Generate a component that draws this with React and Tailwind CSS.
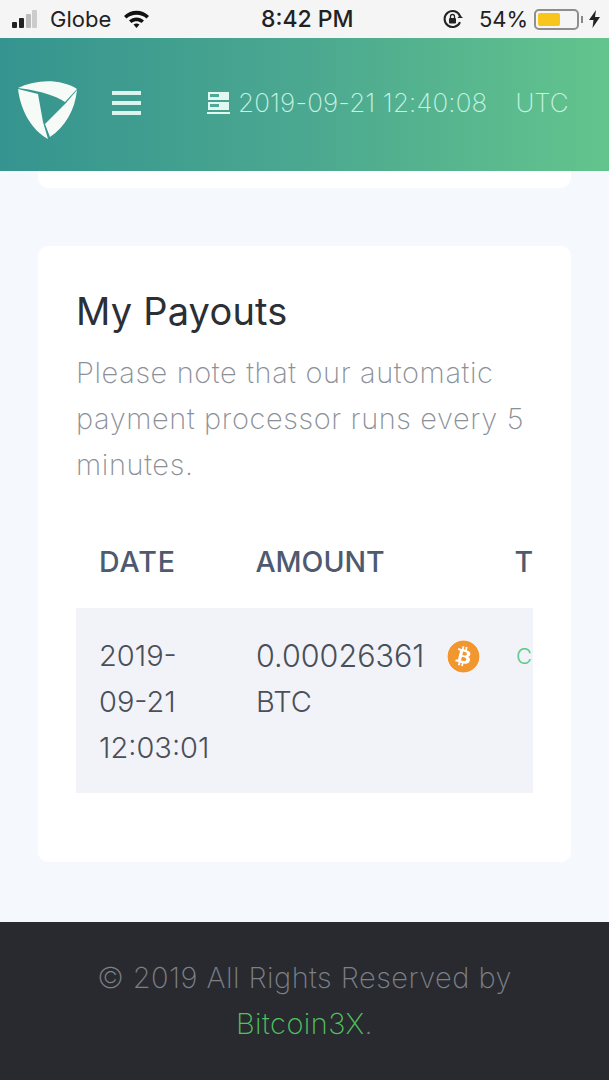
import React from "react";
import { FaBitcoin } from "react-icons/fa";

function StatusBar() {
  return (
    <div className="flex h-[38px] items-center bg-[#f5f5f5] pl-[12px] text-[22px] text-[#222]">
      <div className="flex w-[249px] items-center">
        <svg width="32" height="20" viewBox="0 0 32 20">
          <rect x="0" y="13" width="5" height="6" rx="1" fill="#222" />
          <rect x="7" y="9" width="5" height="10" rx="1" fill="#222" />
          <rect x="14" y="5" width="5" height="14" rx="1" fill="#bbb" />
          <rect x="20" y="1" width="5" height="18" rx="1" fill="#ccc" />
        </svg>
        <span className="ml-[6px] leading-none">Globe</span>
        <svg className="ml-[12px]" width="27" height="20" viewBox="0 0 27 20">
          <path d="M1 7 C8 0 19 0 26 7 L23.5 9.5 C18 4.5 9 4.5 3.5 9.5 Z" fill="#111" />
          <path d="M6 11.5 C10.500 7.500 16.500 7.500 21 11.5 L18.500 14 C15.500 11.500 11.500 11.500 8.500 14 Z" fill="#111" />
          <path d="M10.500 15.500 C12.500 14 14.500 14 16.500 15.500 L13.500 19 Z" fill="#111" />
        </svg>
      </div>
      <div className="w-[181px] text-[23px] font-medium leading-none">8:42 PM</div>
      <svg width="22" height="22" viewBox="0 0 22 22">
        <path d="M18 14 A8 8 0 1 1 18 8" fill="none" stroke="#222" strokeWidth="2" />
        <path d="M15.500 10 L21 10 L18 7 Z" fill="#222" />
        <rect x="7" y="10" width="7" height="5.500" rx="1" fill="#222" />
        <path d="M8.500 10 V8.500 A2 2 0 0 1 12.500 8.500 V10" fill="none" stroke="#222" strokeWidth="1.300" />
      </svg>
      <span className="ml-[15px] leading-none">54%</span>
      <div className="ml-[6px] flex h-[21px] w-[45px] items-center rounded-[5px] border-2 border-[#8e8e8e] p-[2px]">
        <div className="h-full w-[22px] rounded-[2px] bg-[#f7c51c]" />
      </div>
      <div className="ml-[2px] h-[7px] w-[2px] bg-[#888]" />
      <svg className="ml-[6px]" width="11" height="18" viewBox="0 0 11 18">
        <path d="M7 0 L0 10 L4.500 10 L3.500 18 L11 7 L6 7 Z" fill="#222" />
      </svg>
    </div>
  );
}

function Header() {
  return (
    <div className="flex h-[133px] items-center bg-[linear-gradient(90deg,#35948f,#4ba890_50%,#63c48d)] pb-[4px] text-[#c6f3e4]">
      <svg className="ml-[17px] mt-[16px]" width="63" height="62" viewBox="0 0 63 62">
        <path d="M1 8 C20 -1 44 -1 60 9 L48 22 C40 16 20 10 1 8 Z" fill="#f6fbf8" />
        <path d="M1 9 L21 14 L26 42 L31 59 C15 50 4 32 1 9 Z" fill="#f6fbf8" />
        <path d="M60 10 L49 23 L28 44 L33 57 C48 47 58 30 60 10 Z" fill="#f6fbf8" />
      </svg>
      <div className="ml-[32px] flex w-[29px] flex-col gap-[6px]">
        <div className="h-[4px] bg-[#d9f5ee]" />
        <div className="h-[4px] bg-[#d9f5ee]" />
        <div className="h-[4px] bg-[#d9f5ee]" />
      </div>
      <svg className="ml-[66px]" width="23" height="24" viewBox="0 0 23 24">
        <rect x="1" y="1" width="21" height="8" fill="#e3f7f0" />
        <rect x="1" y="11" width="21" height="8" fill="#e3f7f0" />
        <rect x="3" y="3" width="9" height="3" fill="#4fa99a" />
        <rect x="3" y="13" width="9" height="3" fill="#4fa99a" />
        <rect x="0" y="21" width="23" height="2" fill="#e3f7f0" />
      </svg>
      <span className="ml-[8px] text-[26px] font-extralight leading-none tracking-[0.15px]">2019-09-21 12:40:08</span>
      <span className="ml-[28px] text-[26px] font-extralight leading-none">UTC</span>
    </div>
  );
}

export default function App() {
  return (
    <div className="flex h-[1080px] flex-col overflow-hidden bg-[#f5f8fc] font-['Inter',sans-serif]">
      <StatusBar />
      <Header />
      <div className="mx-[38px] h-[17px] rounded-b-[10px] bg-white" />
      <div className="mx-[38px] mt-[58px] h-[616px] rounded-[10px] bg-white px-[38px] pt-[43px]">
        <h1 className="text-[38px] font-normal leading-[44px] tracking-[0.2px] text-[#2b2f36]">My Payouts</h1>
        <p className="mt-[17px] text-[29px] font-extralight leading-[46px] tracking-[0.6px] text-[#8b9098]">
          Please note that our automatic payment processor runs every 5 minutes.
        </p>
        <div className="mt-[25px] overflow-hidden">
          <div className="flex h-[95px] items-start pt-[31px] text-[28.5px] font-medium leading-[36px] text-[#4d5a70]">
            <div className="w-[180px] pl-[23px] tracking-[1px]">DATE</div>
            <div className="w-[260px]">AMOUNT</div>
            <div>T</div>
          </div>
          <div className="flex h-[185px] bg-[#f1f3f8] pt-[25px] text-[29px] font-light leading-[46px] text-[#4a4f58]">
            <div className="w-[180px] pl-[23px]">
              2019-
              <br />
              09-21
              <br />
              12:03:01
            </div>
            <div className="w-[260px]">
              <div className="flex items-center">
                <span className="text-[30.5px]">0.00026361</span>
                <FaBitcoin className="ml-[23px] rounded-full bg-white text-[33px] text-[#f2962f]" />
              </div>
              <div>BTC</div>
            </div>
            <div className="text-[22px] text-[#5cc98a]">C</div>
          </div>
        </div>
      </div>
      <div className="mt-[60px] flex h-[158px] flex-col items-center bg-[#282a30] pt-[33px] text-[29px] font-extralight leading-[46px] tracking-[0.45px] text-[#7d8087]">
        <div>© 2019 All Rights Reserved by</div>
        <div>
          <span className="text-[#4fc35f]">Bitcoin3X</span>.
        </div>
      </div>
    </div>
  );
}
